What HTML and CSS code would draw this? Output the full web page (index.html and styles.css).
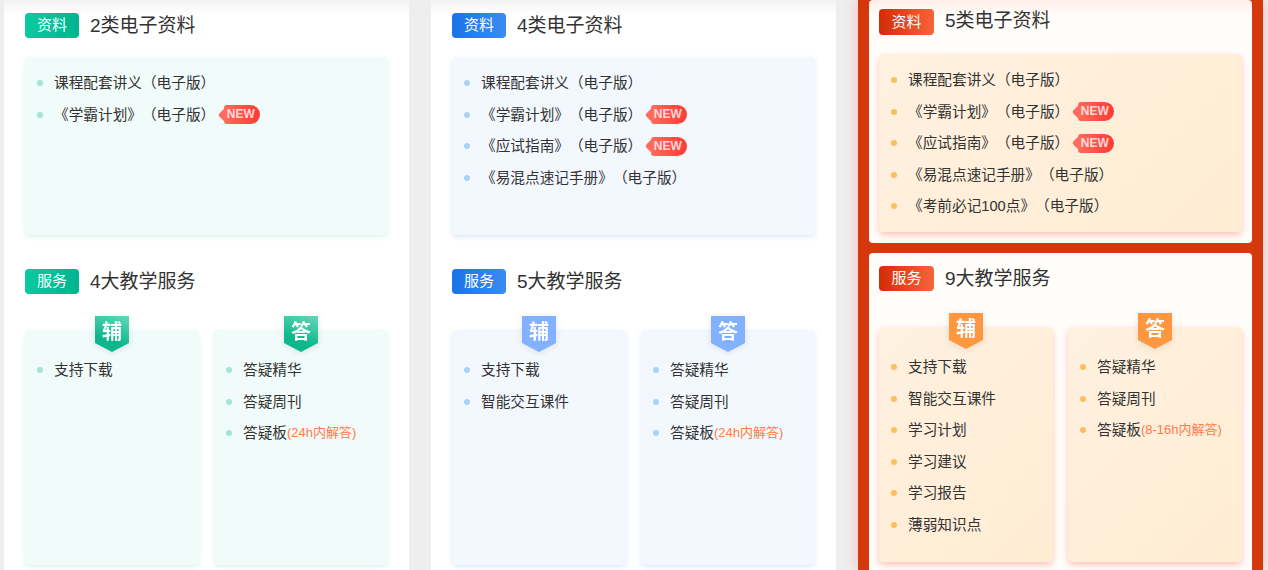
FILE: index.html
```html
<!DOCTYPE html>
<html lang="zh">
<head>
<meta charset="utf-8">
<title>资料与服务</title>
<link rel="stylesheet" href="styles.css">
</head>
<body>
<main class="page">
  <section class="col green">
    <div class="card">
      <div class="head"><span class="tag">资料</span><h3 class="title">2类电子资料</h3></div>
      <div class="panel">
        <ul class="list">
          <li>课程配套讲义（电子版）</li>
          <li>《学霸计划》（电子版）<span class="new">NEW</span></li>
        </ul>
      </div>
    </div>
    <div class="card">
      <div class="head"><span class="tag">服务</span><h3 class="title">4大教学服务</h3></div>
      <div class="subs">
        <div class="panel sub">
          <span class="badge"><span class="badge-in">辅</span></span>
          <ul class="list"><li>支持下载</li></ul>
        </div>
        <div class="panel sub">
          <span class="badge"><span class="badge-in">答</span></span>
          <ul class="list"><li>答疑精华</li><li>答疑周刊</li><li>答疑板<em class="note">(24h内解答)</em></li></ul>
        </div>
      </div>
    </div>
  </section>

  <section class="col blue">
    <div class="card">
      <div class="head"><span class="tag">资料</span><h3 class="title">4类电子资料</h3></div>
      <div class="panel">
        <ul class="list">
          <li>课程配套讲义（电子版）</li>
          <li>《学霸计划》（电子版）<span class="new">NEW</span></li>
          <li>《应试指南》（电子版）<span class="new">NEW</span></li>
          <li>《易混点速记手册》（电子版）</li>
        </ul>
      </div>
    </div>
    <div class="card">
      <div class="head"><span class="tag">服务</span><h3 class="title">5大教学服务</h3></div>
      <div class="subs">
        <div class="panel sub">
          <span class="badge"><span class="badge-in">辅</span></span>
          <ul class="list"><li>支持下载</li><li>智能交互课件</li></ul>
        </div>
        <div class="panel sub">
          <span class="badge"><span class="badge-in">答</span></span>
          <ul class="list"><li>答疑精华</li><li>答疑周刊</li><li>答疑板<em class="note">(24h内解答)</em></li></ul>
        </div>
      </div>
    </div>
  </section>

  <section class="col orange">
    <div class="card">
      <div class="head"><span class="tag">资料</span><h3 class="title">5类电子资料</h3></div>
      <div class="panel">
        <ul class="list">
          <li>课程配套讲义（电子版）</li>
          <li>《学霸计划》（电子版）<span class="new">NEW</span></li>
          <li>《应试指南》（电子版）<span class="new">NEW</span></li>
          <li>《易混点速记手册》（电子版）</li>
          <li>《考前必记100点》（电子版）</li>
        </ul>
      </div>
    </div>
    <div class="card">
      <div class="head"><span class="tag">服务</span><h3 class="title">9大教学服务</h3></div>
      <div class="subs">
        <div class="panel sub">
          <span class="badge"><span class="badge-in">辅</span></span>
          <ul class="list"><li>支持下载</li><li>智能交互课件</li><li>学习计划</li><li>学习建议</li><li>学习报告</li><li>薄弱知识点</li></ul>
        </div>
        <div class="panel sub">
          <span class="badge"><span class="badge-in">答</span></span>
          <ul class="list"><li>答疑精华</li><li>答疑周刊</li><li>答疑板<em class="note">(8-16h内解答)</em></li></ul>
        </div>
      </div>
    </div>
  </section>
</main>
</body>
</html>
```

FILE: styles.css
```css
* { box-sizing: border-box; }
html, body { margin: 0; padding: 0; }
body {
  background: #eeeeee;
  font-family: "Liberation Sans", "Noto Sans CJK SC", sans-serif;
  color: #333;
  height: 570px;
  overflow: hidden;
  text-spacing-trim: space-all;
  font-kerning: none;
}
.page {
  display: grid;
  grid-template-columns: repeat(3, 405px);
  column-gap: 22px;
  padding-left: 4px;
  height: 570px;
  overflow: hidden;
}
.col {
  height: 570px;
  background: linear-gradient(#f3f3f3, #ffffff 15px);
  padding: 13px 21px 0;
}
.card + .card { margin-top: 34px; }
.head {
  display: flex;
  align-items: center;
  height: 25px;
  margin-bottom: 19px;
}
.card + .card .head { margin-bottom: 36px; }
.tag {
  width: 54px;
  height: 25px;
  line-height: 24px;
  border-radius: 4px;
  color: #fff;
  font-size: 15px;
  text-align: center;
  margin-right: 11px;
  flex: none;
}
.title {
  margin: 0;
  font-size: 19px;
  font-weight: 400;
  line-height: 24px;
  color: #333;
}
.panel {
  position: relative;
  height: 178px;
  border-radius: 5px;
  padding: 10.4px 12px 0;
}
.subs {
  display: grid;
  grid-template-columns: 1fr 1fr;
  column-gap: 15px;
}
.sub {
  height: 235px;
  padding-top: 24.4px;
}
.list { list-style: none; margin: 0; padding: 0; }
.list li {
  display: flex;
  align-items: center;
  height: 31.5px;
  line-height: 30px;
  font-size: 14.67px;
  white-space: nowrap;
  color: #333;
}
.list li::before {
  content: "";
  flex: none;
  width: 6px;
  height: 6px;
  border-radius: 50%;
  margin-right: 11px;
}
.note {
  font-style: normal;
  font-size: 13px;
  color: #ff7a4a;
}
.new {
  position: relative;
  z-index: 0;
  width: 36px;
  height: 19px;
  line-height: 19px;
  margin-left: 9px;
  padding-right: 3px;
  border-radius: 3px 9.5px 9.5px 3px;
  background: linear-gradient(90deg, #ff6b5c, #ff3a34);
  color: rgba(255, 255, 255, 0.78);
  font-size: 12px;
  font-weight: 700;
  text-align: center;
}
.new::before {
  content: "";
  position: absolute;
  z-index: -1;
  left: -4px;
  top: 4.5px;
  width: 10px;
  height: 10px;
  background: #ff6b5c;
  transform: rotate(45deg);
  border-radius: 2px;
}
.badge {
  position: absolute;
  top: -14px;
  left: 50%;
  margin-left: -17px;
  width: 34px;
  height: 36px;
  filter: drop-shadow(0 1px 3px rgba(0, 0, 0, 0.1));
}
.badge-in {
  display: block;
  width: 34px;
  height: 36px;
  line-height: 32px;
  clip-path: polygon(0 0, 100% 0, 100% 75%, 50% 100%, 0 75%);
  color: #fff;
  font-size: 20px;
  font-weight: 700;
  text-align: center;
}

/* green */
.green .tag { background: linear-gradient(90deg, #08cba2, #00b48f); }
.green .panel { background: #f1fbf9; box-shadow: 0 2px 5px rgba(80, 200, 170, 0.2); }
.green li::before { background: #a5e4d3; }
.green .badge-in { background: linear-gradient(20deg, #0db78d 35%, #66d8b8); }

/* blue */
.blue .tag { background: linear-gradient(90deg, #1a73e8, #3a8cf2); }
.blue .panel { background: #f3f8ff; box-shadow: 0 2px 5px rgba(100, 150, 240, 0.22); }
.blue li::before { background: #a9d2f6; }
.blue .badge-in { background: #81b1ff; }

/* orange */
.orange {
  background: #d6380e;
  padding: 0 11px;
  box-shadow: 0 0 12px rgba(255, 90, 70, 0.35);
}
.orange .card {
  background: linear-gradient(#ffeee9, #fffdfa 16px);
  border-radius: 4px;
  padding: 9px 10px 11px;
}
.orange .card + .card {
  background: #fffdfa;
  margin-top: 10px;
  padding-top: 13px;
  height: 400px;
}
.orange .head { margin-bottom: 20px; }
.orange .tag {
  width: 55px;
  background: linear-gradient(90deg, #d32c05, #f8643b);
}
.orange .card:first-child .head { align-items: flex-start; }
.orange .card:first-child .tag { height: 26px; line-height: 25px; }
.orange .card:first-child .title { line-height: 23px; }
.orange .panel {
  background: linear-gradient(135deg, #fff1e0, #ffecd3);
  box-shadow: 0 3px 6px rgba(255, 110, 90, 0.4);
}
.orange li::before { background: #ffbe5e; }
.orange .badge-in { background: #ff9640; }
```
